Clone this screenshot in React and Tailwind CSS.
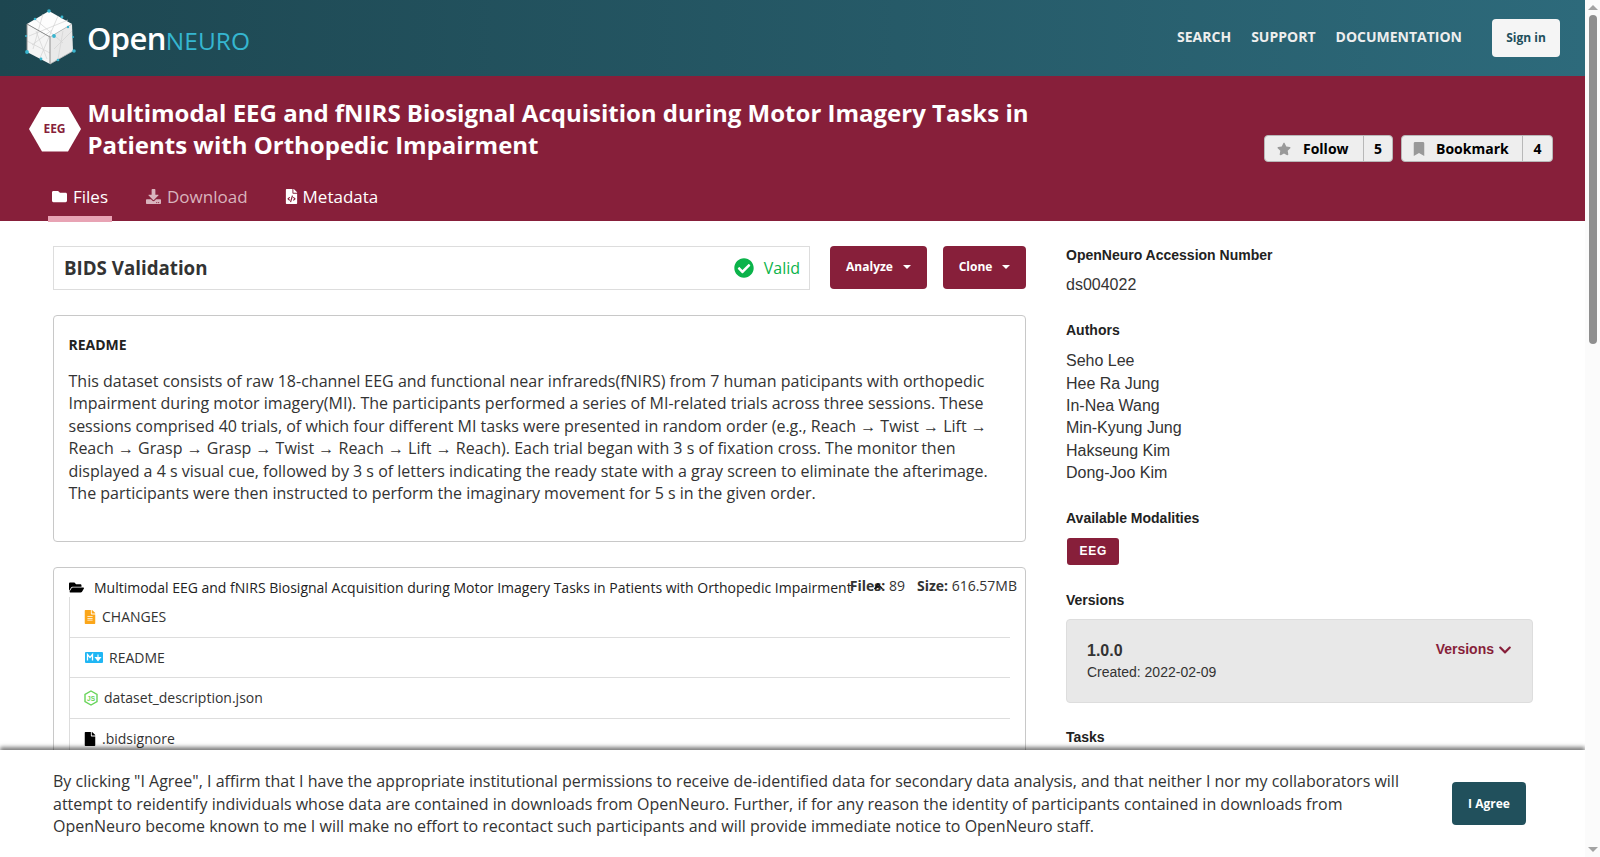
import React from "react";
import {
  FaFolder,
  FaFolderOpen,
  FaDownload,
  FaFileCode,
  FaStar,
  FaBookmark,
  FaCheckCircle,
  FaFile,
  FaFileAlt,
  FaChevronDown,
} from "react-icons/fa";

const openSans = "font-['Open_Sans',sans-serif]";
const liberation = "font-['Liberation_Sans',Arial,sans-serif]";

function Logo() {
  return (
    <svg width="52" height="58" viewBox="0 0 52 58" className="shrink-0">
      <path d="M24 2 L47 15 L25 28 L2 15 Z" fill="#fdfdfd" />
      <path d="M2 15 L25 28 L25 55 L2 43 Z" fill="#f5f5f5" />
      <path d="M47 15 L25 28 L25 55 L48 42 Z" fill="#e9e9e9" />
      <g stroke="#d2d2d2" strokeWidth="0.7" fill="none">
        <path d="M10 10 L38 34 M18 5 L8 40 M33 7 L15 49 M4 27 L43 11 M7 36 L27 21 M29 40 L47 22 M33 50 L38 22 M11 22 L22 50 M2 32 L25 44" />
      </g>
      <path d="M2 15 L25 28 L25 55 M2 15 L2 43" stroke="#8f8f8f" strokeWidth="1" fill="none" />
      <path d="M25 55 L48 42 M25 28 L47 15" stroke="#bdbdbd" strokeWidth="0.8" fill="none" />
      <g fill="#38b5cf">
        <circle cx="24" cy="2" r="1.8" />
        <circle cx="37" cy="8" r="1.4" />
        <circle cx="10" cy="10" r="1.3" />
        <circle cx="43" cy="18" r="1.2" />
        <circle cx="29" cy="27" r="1.9" />
        <circle cx="1" cy="27" r="1" />
        <circle cx="48" cy="28" r="1" />
        <circle cx="2" cy="43" r="1.9" />
        <circle cx="49" cy="42" r="1.8" />
        <circle cx="16" cy="50" r="1.4" />
        <circle cx="33" cy="51" r="1.3" />
      </g>
    </svg>
  );
}

function NodeIcon() {
  return (
    <svg width="14" height="16" viewBox="0 0 14 16" className="shrink-0">
      <path d="M7 1 L13 4.5 L13 11.5 L7 15 L1 11.5 L1 4.5 Z" fill="none" stroke="#68d45a" strokeWidth="1.4" />
      <text x="7" y="10.5" textAnchor="middle" fontSize="6.5" fontWeight="700" fill="#68d45a" fontFamily="Liberation Sans">JS</text>
    </svg>
  );
}

function MarkdownIcon() {
  return (
    <svg width="18" height="11" viewBox="0 0 18 11" className="shrink-0">
      <rect width="18" height="11" rx="1" fill="#1fb6f4" />
      <path d="M2.5 8.5 V2.5 L5 5.5 L7.5 2.5 V8.5" fill="none" stroke="#fff" strokeWidth="1.3" />
      <path d="M13 2.5 V6 M10.6 5.6 H15.4 L13 8.6 Z" fill="#fff" stroke="#fff" strokeWidth="1.1" />
    </svg>
  );
}

function CountButton({ icon, label, count, left, countWidth }) {
  return (
    <div className={`flex h-[27px] rounded-[4px] border border-[#b8b8b8] bg-[#eeeeee] text-[14px] font-bold text-black ${openSans}`}>
      <div className={`flex items-center ${left}`}>
        <span className="text-[#999999]">{icon}</span>
        <span>{label}</span>
      </div>
      <div className={`flex items-center justify-center border-l border-[#b8b8b8] ${countWidth}`}>{count}</div>
    </div>
  );
}

function Tab({ icon, label, active, dim }) {
  return (
    <div className={`flex h-[45px] items-start gap-[6px] border-b-[6px] px-[4px] pt-[7px] text-[17px] ${active ? "border-[#e8a3b4]" : "border-transparent"} ${dim ? "text-[#d9b3bd]" : "text-white"}`}>
      <span className="mt-[5px] text-[15px]">{icon}</span>
      <span>{label}</span>
    </div>
  );
}

function FileRow({ icon, name, gap, pad, last }) {
  return (
    <div className={`flex h-[40.5px] items-center text-[14px] text-[#333333] ${gap} ${pad} ${last ? "" : "border-b border-[#dddddd]"}`}>
      {icon}
      <span>{name}</span>
    </div>
  );
}

function SideHeading({ children, className }) {
  return <h4 className={`text-[14px] leading-[20px] font-bold text-[#222222] ${className}`}>{children}</h4>;
}

export default function App() {
  const authors = ["Seho Lee", "Hee Ra Jung", "In-Nea Wang", "Min-Kyung Jung", "Hakseung Kim", "Dong-Joo Kim"];

  return (
    <div className={`flex h-screen overflow-hidden bg-white ${openSans}`}>
      <div className="relative min-w-0 flex-1 overflow-hidden">
        <header className="flex h-[76px] items-center justify-between bg-gradient-to-r from-[#1d4650] to-[#2d6a7b] px-[25px]">
          <div className="flex items-center gap-[10px]">
            <Logo />
            <div className="flex items-baseline">
              <span className="text-[31px] font-semibold tracking-[-0.6px] text-white">Open</span>
              <span className="text-[24.5px] text-[#35b6d0]">NEURO</span>
            </div>
          </div>
          <nav className="flex items-center">
            <a className="mb-[3px] text-[14px] font-bold text-[#eeeeee]">SEARCH</a>
            <a className="mb-[3px] ml-[20px] text-[14px] font-bold text-[#eeeeee]">SUPPORT</a>
            <a className="mr-[2px] mb-[3px] ml-[20px] text-[14px] font-bold text-[#eeeeee]">DOCUMENTATION</a>
            <button className="ml-[28px] h-[38px] w-[68px] rounded-[4px] bg-[#f5f5f5] text-[12px] font-bold text-[#214f5c]">Sign in</button>
          </nav>
        </header>

        <section className="h-[145px] bg-[#871f3a] pr-[32px] pl-[29px]">
          <div className="flex items-start justify-between pt-[21px]">
            <div className="flex items-center gap-[6.5px]">
              <div className="flex h-[45px] w-[52px] items-center justify-center bg-white pr-[1px] text-[12px] font-bold text-[#871f3a] [clip-path:polygon(25%_0,75%_0,100%_50%,75%_100%,25%_100%,0_50%)]">
                EEG
              </div>
              <h1 className="w-[960px] text-[24px] leading-[32px] font-bold text-white">
                Multimodal EEG and fNIRS Biosignal Acquisition during Motor Imagery Tasks in Patients with Orthopedic Impairment
              </h1>
            </div>
            <div className="mt-[38px] flex gap-[8px]">
              <CountButton icon={<FaStar />} label="Follow" count="5" left="w-[98px] gap-[12px] pl-[12px]" countWidth="w-[29px]" />
              <CountButton icon={<FaBookmark />} label="Bookmark" count="4" left="w-[120px] gap-[10px] pl-[10px]" countWidth="w-[30px]" />
            </div>
          </div>
          <div className="mt-[15px] ml-[19px] flex gap-[30px]">
            <Tab icon={<FaFolder />} label="Files" active />
            <Tab icon={<FaDownload />} label="Download" dim />
            <Tab icon={<FaFileCode className="mx-[-2px]" />} label="Metadata" />
          </div>
        </section>

        <main className="flex pt-[25px] pl-[53px]">
          <div className="w-[973px] shrink-0">
            <div className="flex gap-[20px]">
              <div className="flex h-[44px] w-[757px] items-center justify-between border border-[#dddddd] pr-[9px] pl-[10px]">
                <span className="text-[18.72px] font-bold text-[#333333]">BIDS Validation</span>
                <span className="flex items-center gap-[10px] text-[16px] text-[#0bb34a]">
                  <FaCheckCircle className="text-[20px]" /> Valid
                </span>
              </div>
              <button className="flex h-[43px] w-[97px] items-center justify-center gap-[10px] rounded-[4px] bg-[#871f3a] pb-[2px] text-[12px] font-bold text-white">
                Analyze <span className="border-x-[4px] border-t-[4px] border-x-transparent border-t-white" />
              </button>
              <button className="ml-[-4px] flex h-[43px] w-[83px] items-center justify-center gap-[10px] rounded-[4px] bg-[#871f3a] pb-[2px] text-[12px] font-bold text-white">
                Clone <span className="border-x-[4px] border-t-[4px] border-x-transparent border-t-white" />
              </button>
            </div>

            <div className="mt-[25px] h-[227px] rounded-[4px] border border-[#c8c8c8] pt-[19px] pr-[15px] pl-[14.5px]">
              <h3 className="text-[14px] leading-[19px] font-bold text-[#222222]">README</h3>
              <p className="mt-[16px] text-[16px] leading-[22.4px] text-[#333333]">
                This dataset consists of raw 18-channel EEG and functional near infrareds(fNIRS) from 7 human paticipants with orthopedic Impairment during motor imagery(MI). The participants performed a series of MI-related trials across three sessions. These sessions comprised 40 trials, of which four different MI tasks were presented in random order (e.g., Reach → Twist → Lift → Reach → Grasp → Grasp → Twist → Reach → Lift → Reach). Each trial began with 3 s of fixation cross. The monitor then displayed a 4 s visual cue, followed by 3 s of letters indicating the ready state with a gray screen to eliminate the afterimage. The participants were then instructed to perform the imaginary movement for 5 s in the given order.
              </p>
            </div>

            <div className="relative mt-[25px] h-[260px] rounded-[4px] border border-[#c8c8c8] px-[15px] pt-[10px]">
              <div className="flex h-[19px] items-center gap-[10px] whitespace-nowrap text-[14px] text-[#222222]">
                <FaFolderOpen className="text-[15px] text-black" />
                <span>Multimodal EEG and fNIRS Biosignal Acquisition during Motor Imagery Tasks in Patients with Orthopedic Impairment</span>
              </div>
              <div className="absolute top-[7px] right-[8px] flex gap-[12px] text-[14px] text-[#333333]">
                <span><b>Files:</b> 89</span>
                <span><b>Size:</b> 616.57MB</span>
              </div>
              <svg width="9" height="7" viewBox="0 0 9 7" className="absolute top-[15px] left-[820px]">
                <path d="M0.5 6 L4 1 L8.5 6 M1 6 L5 3" fill="none" stroke="#111" strokeWidth="1.4" />
              </svg>
              <div className="border-l border-[#dddddd]">
                <FileRow icon={<FaFileAlt className="mx-[-1px] text-[14px] text-[#fba61a]" />} name="CHANGES" gap="gap-[6px]" pad="pl-[14px]" />
                <FileRow icon={<MarkdownIcon />} name="README" gap="gap-[6px]" pad="pl-[15px]" />
                <FileRow icon={<NodeIcon />} name="dataset_description.json" gap="gap-[6px]" pad="pl-[14px]" />
                <FileRow icon={<FaFile className="mx-[-1px] text-[14px] text-black" />} name=".bidsignore" gap="gap-[6px]" pad="pl-[14px]" last />
              </div>
            </div>
          </div>

          <aside className={`ml-[40px] w-[467px] shrink-0 ${liberation}`}>
            <SideHeading className="mt-[-1px] mb-[9px]">OpenNeuro Accession Number</SideHeading>
            <p className="text-[16px] leading-[22.4px] text-[#333333]">ds004022</p>

            <div className="mt-[24px]">
              <SideHeading className="mb-[9.7px]">Authors</SideHeading>
              {authors.map((a) => (
                <p key={a} className="text-[16px] leading-[22.4px] text-[#333333]">{a}</p>
              ))}
            </div>

            <div className="mt-[23.3px]">
              <SideHeading className="mb-[10px]">Available Modalities</SideHeading>
              <span className="ml-[1px] inline-block h-[27px] rounded-[3px] bg-[#871f3a] px-[12.5px] text-[12px] leading-[26px] font-bold tracking-[0.7px] text-white">EEG</span>
            </div>

            <div className="mt-[25px]">
              <SideHeading className="mb-[9px]">Versions</SideHeading>
              <div className="flex h-[84px] justify-between rounded-[4px] border border-[#dddddd] bg-[#e8e8e8] px-[20px] pt-[20px]">
                <div>
                  <p className="text-[16px] leading-[22px] font-bold text-[#333333]">1.0.0</p>
                  <p className="text-[14px] leading-[20px] text-[#333333]">Created: 2022-02-09</p>
                </div>
                <span className="flex h-[20px] items-center gap-[4px] text-[14px] font-bold text-[#871f3a]">
                  Versions <FaChevronDown className="text-[14px]" />
                </span>
              </div>
            </div>

            <div className="mt-[24px]">
              <SideHeading>Tasks</SideHeading>
            </div>
          </aside>
        </main>

        <div className="absolute right-0 bottom-0 left-0 flex h-[107px] items-center justify-between bg-white pt-[1px] pr-[59px] pl-[53px] shadow-[0_-3px_4px_rgba(0,0,0,0.5)]">
          <p className="w-[1365px] text-[16px] leading-[22.4px] text-[#333333]">
            By clicking "I Agree", I affirm that I have the appropriate institutional permissions to receive de-identified data for secondary data analysis, and that neither I nor my collaborators will attempt to reidentify individuals whose data are contained in downloads from OpenNeuro. Further, if for any reason the identity of participants contained in downloads from OpenNeuro become known to me I will make no effort to recontact such participants and will provide immediate notice to OpenNeuro staff.
          </p>
          <button className="mb-[1px] h-[43px] w-[74px] rounded-[4px] bg-[#21505c] text-[12px] font-bold text-white">I Agree</button>
        </div>
      </div>

      <div className="flex w-[15px] shrink-0 flex-col items-center bg-[#fbfbfb]">
        <span className="mt-[5px] border-x-[5px] border-b-[5px] border-x-transparent border-b-[#a3a3a3]" />
        <div className="mt-[5px] h-[329px] w-[8px] rounded-full bg-[#8f8f8f]" />
        <div className="flex-1" />
        <span className="mb-[5px] border-x-[5px] border-t-[5px] border-x-transparent border-t-[#a3a3a3]" />
      </div>
    </div>
  );
}
